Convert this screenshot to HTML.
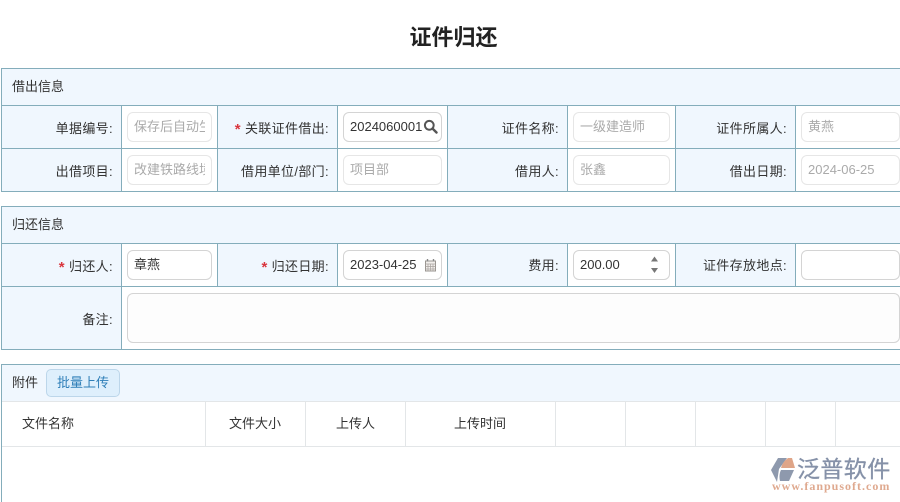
<!DOCTYPE html>
<html lang="zh-CN">
<head>
<meta charset="utf-8">
<title>证件归还</title>
<style>
html,body{margin:0;padding:0;background:#fff}
body{width:900px;height:502px;position:relative;overflow:hidden;font-family:"Liberation Sans","Noto Sans CJK SC",sans-serif;font-size:13px;color:#333}
#p{position:absolute;left:0;top:0;width:900px;height:502px;filter:blur(.3px);overflow:hidden;background:#fff}
div,span{position:absolute;box-sizing:border-box;white-space:nowrap}
.bg{background:#f0f7fe}
.h{background:#84adbb;height:1px}
.v{background:#84adbb;width:1px}
.g{background:#e3e6e8}
.lb{line-height:18px;text-align:right;color:#333;letter-spacing:.35px}
.lb i{font-style:normal;font-weight:bold;font-size:15px;position:relative;top:1px;color:#d9363e;margin-right:4px}
.in{background:#fff;border:1px solid #e6e6e6;border-radius:6px;height:30px;line-height:28px;color:#aaa}
.in.d{border-color:#d4d4d4;color:#333}
.in b{font-weight:normal;position:absolute;left:6px;right:6px;top:0;bottom:0;overflow:hidden;display:block}
.t{line-height:18px;color:#333}
</style>
</head>
<body>
<div id="p">
<div style="left:0;top:23px;width:907px;text-align:center;font-size:22px;font-weight:bold;line-height:30px;color:#222">证件归还</div>

<!-- panel 1 -->
<div class="bg" style="left:1px;top:68px;width:899px;height:123px"></div>
<div style="left:122px;top:106px;width:95px;height:85px;background:#fff"></div>
<div style="left:338px;top:106px;width:109px;height:85px;background:#fff"></div>
<div style="left:568px;top:106px;width:107px;height:85px;background:#fff"></div>
<div style="left:796px;top:106px;width:104px;height:85px;background:#fff"></div>
<div class="h" style="left:1px;top:68px;width:899px"></div>
<div class="h" style="left:1px;top:105px;width:899px"></div>
<div class="h" style="left:1px;top:148px;width:899px"></div>
<div class="h" style="left:1px;top:191px;width:899px"></div>
<div class="v" style="left:1px;top:68px;height:124px"></div>
<div class="v" style="left:121px;top:105px;height:86px"></div>
<div class="v" style="left:217px;top:105px;height:86px"></div>
<div class="v" style="left:337px;top:105px;height:86px"></div>
<div class="v" style="left:447px;top:105px;height:86px"></div>
<div class="v" style="left:567px;top:105px;height:86px"></div>
<div class="v" style="left:675px;top:105px;height:86px"></div>
<div class="v" style="left:795px;top:105px;height:86px"></div>

<div class="t" style="left:12px;top:78px">借出信息</div>

<div class="lb" style="right:787px;top:120px">单据编号:</div>
<div class="lb" style="right:571px;top:120px"><i>*</i>关联证件借出:</div>
<div class="lb" style="right:341px;top:120px">证件名称:</div>
<div class="lb" style="right:113px;top:120px">证件所属人:</div>
<div class="lb" style="right:787px;top:163px">出借项目:</div>
<div class="lb" style="right:571px;top:163px">借用单位/部门:</div>
<div class="lb" style="right:341px;top:163px">借用人:</div>
<div class="lb" style="right:113px;top:163px">借出日期:</div>

<div class="in" style="left:127px;top:112px;width:85px"><b>保存后自动生成</b></div>
<div class="in d" style="left:343px;top:112px;width:99px"><b>2024060001</b></div>
<svg style="position:absolute;left:423px;top:119px" width="15" height="15" viewBox="0 0 15 15"><circle cx="6.3" cy="6.3" r="4.4" fill="none" stroke="#555" stroke-width="2"/><path d="M9.6 9.6L13.5 13.5" stroke="#555" stroke-width="2.4" stroke-linecap="round"/></svg>
<div class="in" style="left:573px;top:112px;width:97px"><b>一级建造师</b></div>
<div class="in" style="left:801px;top:112px;width:99px"><b>黄燕</b></div>
<div class="in" style="left:127px;top:155px;width:85px"><b>改建铁路线境内</b></div>
<div class="in" style="left:343px;top:155px;width:99px"><b>项目部</b></div>
<div class="in" style="left:573px;top:155px;width:97px"><b>张鑫</b></div>
<div class="in" style="left:801px;top:155px;width:99px"><b>2024-06-25</b></div>

<!-- panel 2 -->
<div class="bg" style="left:1px;top:206px;width:899px;height:143px"></div>
<div style="left:122px;top:244px;width:95px;height:42px;background:#fff"></div>
<div style="left:338px;top:244px;width:109px;height:42px;background:#fff"></div>
<div style="left:568px;top:244px;width:107px;height:42px;background:#fff"></div>
<div style="left:796px;top:244px;width:104px;height:42px;background:#fff"></div>
<div style="left:122px;top:287px;width:778px;height:62px;background:#fff"></div>
<div class="h" style="left:1px;top:206px;width:899px"></div>
<div class="h" style="left:1px;top:243px;width:899px"></div>
<div class="h" style="left:1px;top:286px;width:899px"></div>
<div class="h" style="left:1px;top:349px;width:899px"></div>
<div class="v" style="left:1px;top:206px;height:144px"></div>
<div class="v" style="left:121px;top:243px;height:106px"></div>
<div class="v" style="left:217px;top:243px;height:43px"></div>
<div class="v" style="left:337px;top:243px;height:43px"></div>
<div class="v" style="left:447px;top:243px;height:43px"></div>
<div class="v" style="left:567px;top:243px;height:43px"></div>
<div class="v" style="left:675px;top:243px;height:43px"></div>
<div class="v" style="left:795px;top:243px;height:43px"></div>

<div class="t" style="left:12px;top:216px">归还信息</div>
<div class="lb" style="right:787px;top:258px"><i>*</i>归还人:</div>
<div class="lb" style="right:571px;top:258px"><i>*</i>归还日期:</div>
<div class="lb" style="right:341px;top:257px">费用:</div>
<div class="lb" style="right:113px;top:257px">证件存放地点:</div>
<div class="lb" style="right:787px;top:311px">备注:</div>

<div class="in d" style="left:127px;top:250px;width:85px"><b>章燕</b></div>
<div class="in d" style="left:343px;top:250px;width:99px"><b>2023-04-25</b></div>
<svg style="position:absolute;left:424px;top:258px" width="13" height="14" viewBox="0 0 13 14"><path d="M1.500 3H11.500V13H1.500Z" fill="#f2efec" stroke="#9a9590"/><path d="M1.500 6H11.500M1.500 8.500H11.500M1.500 11H11.500M4 6V13M6.500 6V13M9 6V13" stroke="#a8a39e" stroke-width=".7"/><path d="M3.500 1V3.500M9.500 1V3.500" stroke="#888" stroke-width="1.400"/></svg>
<div class="in d" style="left:573px;top:250px;width:97px"><b>200.00</b></div>
<svg style="position:absolute;left:650px;top:255px" width="9" height="20" viewBox="0 0 9 20"><path d="M1 6.500L4.500 1.500L8 6.500Z" fill="#777"/><path d="M1 13L4.500 18L8 13Z" fill="#777"/></svg>
<div class="in d" style="left:801px;top:250px;width:99px"></div>
<div class="in d" style="left:127px;top:293px;width:773px;height:50px;background:#fdfdfd"></div>

<!-- panel 3 -->
<div class="bg" style="left:1px;top:364px;width:899px;height:37px"></div>
<div class="h" style="left:1px;top:364px;width:899px"></div>
<div class="v" style="left:1px;top:364px;height:138px"></div>
<div class="t" style="left:12px;top:374px">附件</div>
<div style="left:46px;top:369px;width:74px;height:28px;background:#deeffc;border:1px solid #bcd6ea;border-radius:5px;text-align:center;line-height:25px;color:#2f7fb8">批量上传</div>

<div class="g" style="left:2px;top:401px;width:898px;height:1px"></div>
<div class="g" style="left:2px;top:446px;width:898px;height:1px"></div>
<div class="g" style="left:205px;top:401px;width:1px;height:45px"></div>
<div class="g" style="left:305px;top:401px;width:1px;height:45px"></div>
<div class="g" style="left:405px;top:401px;width:1px;height:45px"></div>
<div class="g" style="left:555px;top:401px;width:1px;height:45px"></div>
<div class="g" style="left:625px;top:401px;width:1px;height:45px"></div>
<div class="g" style="left:695px;top:401px;width:1px;height:45px"></div>
<div class="g" style="left:765px;top:401px;width:1px;height:45px"></div>
<div class="g" style="left:835px;top:401px;width:1px;height:45px"></div>

<div class="t" style="left:22px;top:415px">文件名称</div>
<div class="t" style="left:229px;top:415px">文件大小</div>
<div class="t" style="left:336px;top:415px">上传人</div>
<div class="t" style="left:454px;top:415px">上传时间</div>

<!-- logo -->
<svg style="position:absolute;left:770px;top:457px" width="27" height="26" viewBox="0 0 27 26">
<path d="M8 1H17L9 12L7 25L1 13Z" fill="#8e99ad"/>
<path d="M18 1H22L25 11H11C12 7 14 4 18 1Z" fill="#dfa588"/>
<path d="M11 13H24L19 24H10C9 20 9.500 16 11 13Z" fill="#8e99ad"/>
</svg>
<div style="left:797px;top:454px;font-size:23px;line-height:30px;color:#8591a8;letter-spacing:.4px;-webkit-text-stroke:.3px #8591a8">泛普软件</div>
<div style="left:772px;top:480px;width:119px;font-family:'Liberation Serif',serif;font-size:12px;line-height:13px;font-weight:bold;color:#dfa98f;letter-spacing:1px">www.fanpusoft.com</div>
</div>
</body>
</html>
